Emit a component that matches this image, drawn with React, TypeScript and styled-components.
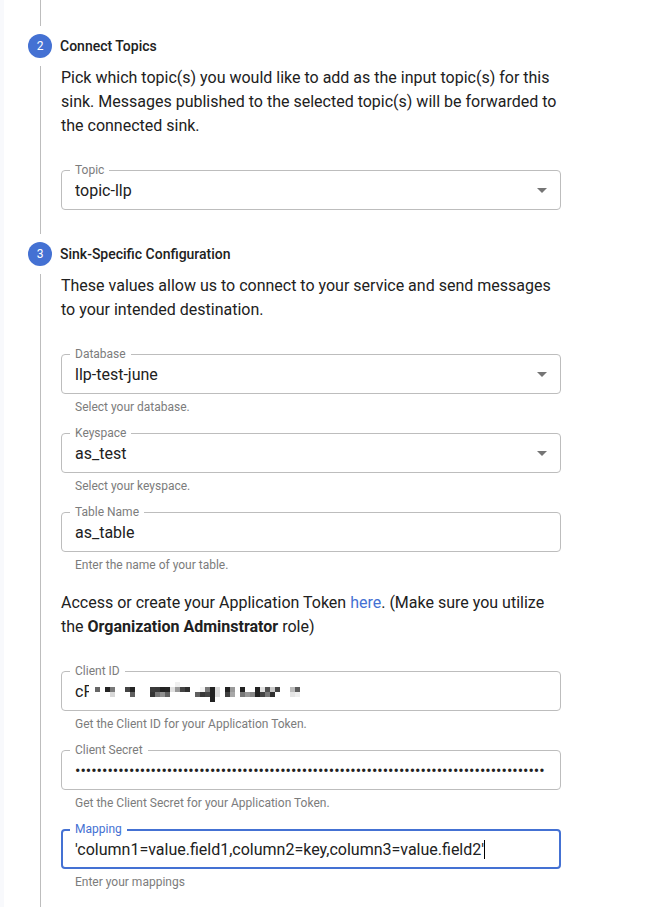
import React, { useLayoutEffect, useState } from "react";
import styled, { createGlobalStyle } from "styled-components";

const BLUE = "#4471d3";
const INK = "#212121";
const MUTED = "#7c7c7c";
const LINE = "#bdbdbd";

const GlobalStyle = createGlobalStyle`
  *, *::before, *::after { box-sizing: border-box; }
  body {
    margin: 0;
    background: #fff;
    color: ${INK};
    font-family: Roboto, "Liberation Sans", sans-serif;
    font-size: 16px;
    line-height: 24px;
  }
`;

const Page = styled.main`
  display: flex;
  flex-direction: column;
  min-height: 100vh;
  border-left: 4px solid #f8f9fc;
  padding-left: 24px;
  padding-right: 16px;
`;

const LeadingLine = styled.div`
  height: 26px;
  margin-left: 12px;
  border-left: 1px solid ${LINE};
`;

const StepSection = styled.section<{ $last?: boolean }>`
  display: flex;
  flex-direction: column;
  flex: ${(p) => (p.$last ? "1 0 auto" : "0 0 auto")};
`;

const StepHeader = styled.header`
  display: flex;
  align-items: center;
  gap: 8px;
  padding: 8px 0;
`;

const StepNumber = styled.span`
  display: flex;
  align-items: center;
  justify-content: center;
  width: 24px;
  height: 24px;
  border-radius: 50%;
  background: ${BLUE};
  color: #fff;
  font-size: 12px;
`;

const StepTitle = styled.h2`
  margin: 0;
  font-size: 14px;
  line-height: 20px;
  font-weight: 500;
`;

const StepBody = styled.div<{ $last?: boolean }>`
  display: flex;
  flex-direction: column;
  flex: 1 0 auto;
  margin-left: 12px;
  border-left: 1px solid ${LINE};
  padding: 0 0 ${(p) => (p.$last ? "12px" : "24px")} 20px;
`;

const Stack = styled.div`
  display: flex;
  flex-direction: column;
  gap: 16px;
  width: 100%;
  max-width: 500px;
`;

const Paragraph = styled.p`
  margin: 0 0 16px;
  padding-right: 4px;
`;

const TokenLink = styled.a`
  color: ${BLUE};
  text-decoration: none;
`;

const FieldRoot = styled.div`
  display: flex;
  flex-direction: column;
  gap: 3px;
`;

const ControlBox = styled.div`
  position: relative;
  display: flex;
`;

const FieldLabel = styled.label<{ $active?: boolean }>`
  position: absolute;
  z-index: 1;
  top: -8px;
  left: 9px;
  padding: 0 5px;
  background: #fff;
  color: ${(p) => (p.$active ? BLUE : MUTED)};
  font-size: 12px;
  line-height: 16px;
`;

const TextInput = styled.input<{ $active?: boolean }>`
  width: 100%;
  height: 40px;
  border: ${(p) => (p.$active ? `2px solid ${BLUE}` : `1px solid ${LINE}`)};
  border-radius: 4px;
  padding: 0 ${(p) => (p.$active ? "12px" : "13px")};
  background: #fff;
  color: ${INK};
  font: inherit;
  outline: none;
  caret-color: ${(p) => (p.$active ? "transparent" : "auto")};
`;

const SelectInput = styled.select`
  width: 100%;
  height: 40px;
  border: 1px solid ${LINE};
  border-radius: 4px;
  padding: 2px 32px 0 13px;
  background: #fff;
  color: ${INK};
  font: inherit;
  appearance: none;
  outline: none;
`;

const Arrow = styled.svg`
  position: absolute;
  top: 8px;
  right: 7px;
  width: 24px;
  height: 24px;
  fill: #757575;
  pointer-events: none;
`;

const Caret = styled.span`
  position: absolute;
  top: 11px;
  width: 1px;
  height: 19px;
  background: #000;
`;

const Mosaic = styled.svg`
  position: absolute;
  top: 11px;
  left: 28px;
  width: 216px;
  height: 20px;
  background: #fff;
`;

const Helper = styled.span`
  padding-left: 14px;
  color: ${MUTED};
  font-size: 12px;
  line-height: 20px;
`;

/* Redaction blocks: column, row, grey level (hex pair). */
const BLOCKS: [number, number, string][] = [
  [16, 0, "f0"],
  [0, 1, "66"], [2, 1, "24"], [3, 1, "78"], [6, 1, "44"], [7, 1, "24"],
  [11, 1, "3a"], [12, 1, "38"], [13, 1, "22"], [14, 1, "24"], [15, 1, "e0"],
  [16, 1, "99"], [17, 1, "44"], [18, 1, "30"], [21, 1, "f3"], [22, 1, "78"],
  [23, 1, "22"], [24, 1, "dc"], [26, 1, "22"], [27, 1, "99"], [29, 1, "22"],
  [32, 1, "22"], [33, 1, "e0"], [34, 1, "50"], [35, 1, "c8"], [36, 1, "44"],
  [39, 1, "bb"], [40, 1, "5c"],
  [3, 2, "d8"], [7, 2, "60"], [11, 2, "33"], [12, 2, "78"], [13, 2, "90"],
  [14, 2, "60"], [20, 2, "60"], [21, 2, "38"], [22, 2, "44"], [23, 2, "22"],
  [24, 2, "dc"], [26, 2, "40"], [27, 2, "a8"], [29, 2, "78"], [30, 2, "99"],
  [31, 2, "88"], [32, 2, "22"], [33, 2, "44"], [34, 2, "78"], [35, 2, "30"],
  [39, 2, "e4"], [40, 2, "ee"],
  [23, 3, "22"],
];

type StepProps = { number: number; title: string; last?: boolean; children: React.ReactNode };

function Step({ number, title, last, children }: StepProps) {
  return (
    <StepSection $last={last}>
      <StepHeader>
        <StepNumber>{number}</StepNumber>
        <StepTitle>{title}</StepTitle>
      </StepHeader>
      <StepBody $last={last}>
        <Stack>{children}</Stack>
      </StepBody>
    </StepSection>
  );
}

type FieldProps = {
  id: string;
  label: string;
  helper?: string;
  active?: boolean;
  children: React.ReactNode;
};

function Field({ id, label, helper, active, children }: FieldProps) {
  return (
    <FieldRoot>
      <ControlBox>
        <FieldLabel htmlFor={id} $active={active}>{label}</FieldLabel>
        {children}
      </ControlBox>
      {helper && <Helper>{helper}</Helper>}
    </FieldRoot>
  );
}

function SelectField({ id, label, helper, value }: { id: string; label: string; helper?: string; value: string }) {
  return (
    <Field id={id} label={label} helper={helper}>
      <SelectInput id={id} defaultValue={value}>
        <option value={value}>{value}</option>
      </SelectInput>
      <Arrow viewBox="0 0 24 24" aria-hidden="true"><path d="M7 10l5 5 5-5z" /></Arrow>
    </Field>
  );
}

function MappingField() {
  const [value, setValue] = useState("'column1=value.field1,column2=key,column3=value.field2'");
  const [caretLeft, setCaretLeft] = useState(14);

  useLayoutEffect(() => {
    const context = document.createElement("canvas").getContext("2d");
    if (!context) return;
    context.font = "16px Roboto";
    setCaretLeft(14 + Math.round(context.measureText(value).width));
  }, [value]);

  return (
    <Field id="mapping" label="Mapping" helper="Enter your mappings" active>
      <TextInput id="mapping" $active value={value} onChange={(e) => setValue(e.target.value)} />
      <Caret style={{ left: caretLeft }} />
    </Field>
  );
}

export default function App() {
  return (
    <>
      <GlobalStyle />
      <Page>
        <LeadingLine />
        <Step number={2} title="Connect Topics">
          <Paragraph>
            Pick which topic(s) you would like to add as the input topic(s) for this sink. Messages
            published to the selected topic(s) will be forwarded to the connected sink.
          </Paragraph>
          <SelectField id="topic" label="Topic" value="topic-llp" />
        </Step>
        <Step number={3} title="Sink-Specific Configuration" last>
          <Paragraph>
            These values allow us to connect to your service and send messages to your intended
            destination.
          </Paragraph>
          <SelectField id="database" label="Database" value="llp-test-june" helper="Select your database." />
          <SelectField id="keyspace" label="Keyspace" value="as_test" helper="Select your keyspace." />
          <Field id="table-name" label="Table Name" helper="Enter the name of your table.">
            <TextInput id="table-name" type="text" defaultValue="as_table" />
          </Field>
          <Paragraph>
            Access or create your Application Token <TokenLink href="#token">here</TokenLink>. (Make
            sure you utilize the <b>Organization Adminstrator</b> role)
          </Paragraph>
          <Field id="client-id" label="Client ID" helper="Get the Client ID for your Application Token.">
            <TextInput id="client-id" type="text" defaultValue="cF" />
            <Mosaic viewBox="0 0 216 20" shapeRendering="crispEdges" aria-hidden="true">
              {BLOCKS.map(([col, row, tone]) => (
                <rect
                  key={`${col}-${row}`}
                  x={6 + col * 5}
                  y={row * 5}
                  width="5"
                  height="5"
                  fill={`#${tone}${tone}${tone}`}
                />
              ))}
            </Mosaic>
          </Field>
          <Field id="client-secret" label="Client Secret" helper="Get the Client Secret for your Application Token.">
            <TextInput id="client-secret" type="password" defaultValue={"x".repeat(87)} />
          </Field>
          <MappingField />
        </Step>
      </Page>
    </>
  );
}
